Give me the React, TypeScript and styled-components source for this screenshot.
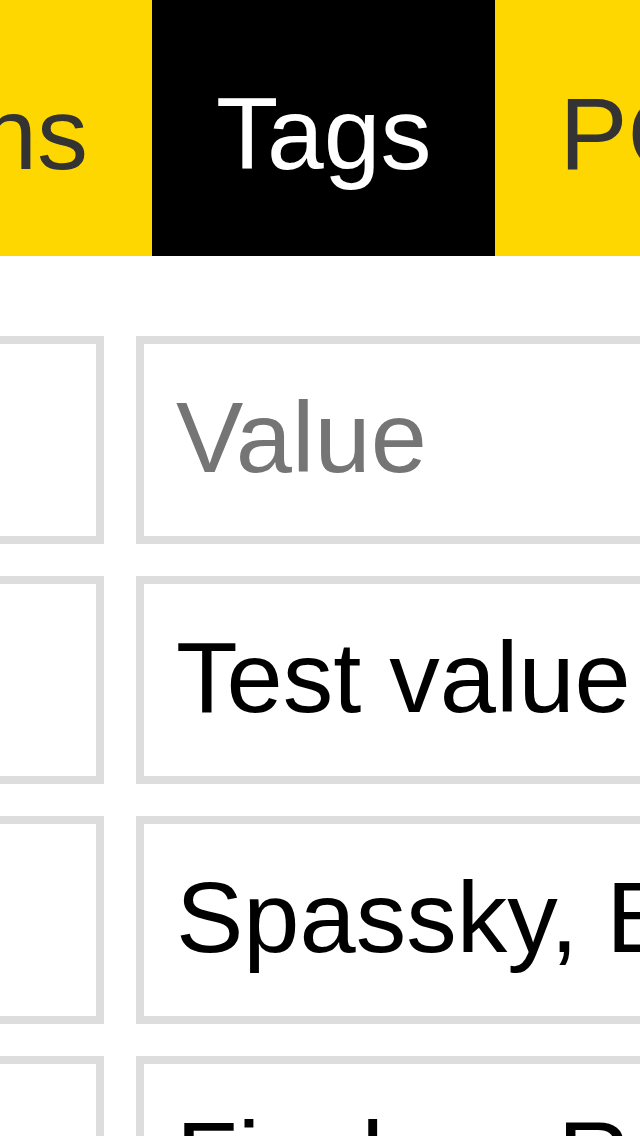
import { createGlobalStyle } from "styled-components";
import styled from "styled-components";

const GlobalStyle = createGlobalStyle`
  html, body {
    margin: 0;
    padding: 0;
    background: #fff;
    overflow: hidden;
  }
  body {
    font-family: "Liberation Sans", Arial, Helvetica, sans-serif;
  }
`;

const Page = styled.div`
  width: 640px;
  min-height: 1136px;
  display: flex;
  flex-direction: column;
  gap: 80px;
`;

const TabBar = styled.nav`
  display: grid;
  grid-template-columns: 152px auto 1fr;
  height: 256px;
  background: #ffd700;
`;

const Tab = styled.div<{ $active?: boolean; $align?: "start" | "end" }>`
  justify-self: ${(p) => p.$align || "start"};
  box-sizing: border-box;
  height: 256px;
  padding: 76px 64px 0;
  font-size: 102px;
  line-height: normal;
  white-space: nowrap;
  background: ${(p) => (p.$active ? "#000" : "#ffd700")};
  color: ${(p) => (p.$active ? "#fff" : "#333")};
  cursor: pointer;
`;

const Rows = styled.div`
  display: flex;
  flex-direction: column;
  gap: 32px;
`;

const Row = styled.div`
  display: grid;
  grid-template-columns: 104px minmax(0, 1fr);
  gap: 32px;
`;

const Field = styled.input<{ $key?: boolean }>`
  justify-self: ${(p) => (p.$key ? "end" : "start")};
  width: ${(p) => (p.$key ? "540px" : "900px")};
  height: 208px;
  box-sizing: border-box;
  margin: 0;
  padding: 0 32px 6px;
  border: 8px solid #ddd;
  border-radius: 0;
  outline: none;
  background: #fff;
  color: #000;
  font-family: "Liberation Sans", Arial, Helvetica, sans-serif;
  font-size: 101px;
  &::placeholder {
    color: #757575;
  }
`;

const tags = [
  { key: "Event", value: "Test value" },
  { key: "White", value: "Spassky, Boris" },
  { key: "Black", value: "Fischer, Robert" },
];

export default function App() {
  return (
    <>
      <GlobalStyle />
      <Page>
        <TabBar>
          <Tab $align="end">Options</Tab>
          <Tab $active>Tags</Tab>
          <Tab>PGN</Tab>
        </TabBar>
        <Rows>
          <Row>
            <Field $key placeholder="Key" />
            <Field placeholder="Value" />
          </Row>
          {tags.map((t) => (
            <Row key={t.key}>
              <Field $key defaultValue={t.key} />
              <Field defaultValue={t.value} />
            </Row>
          ))}
        </Rows>
      </Page>
    </>
  );
}
